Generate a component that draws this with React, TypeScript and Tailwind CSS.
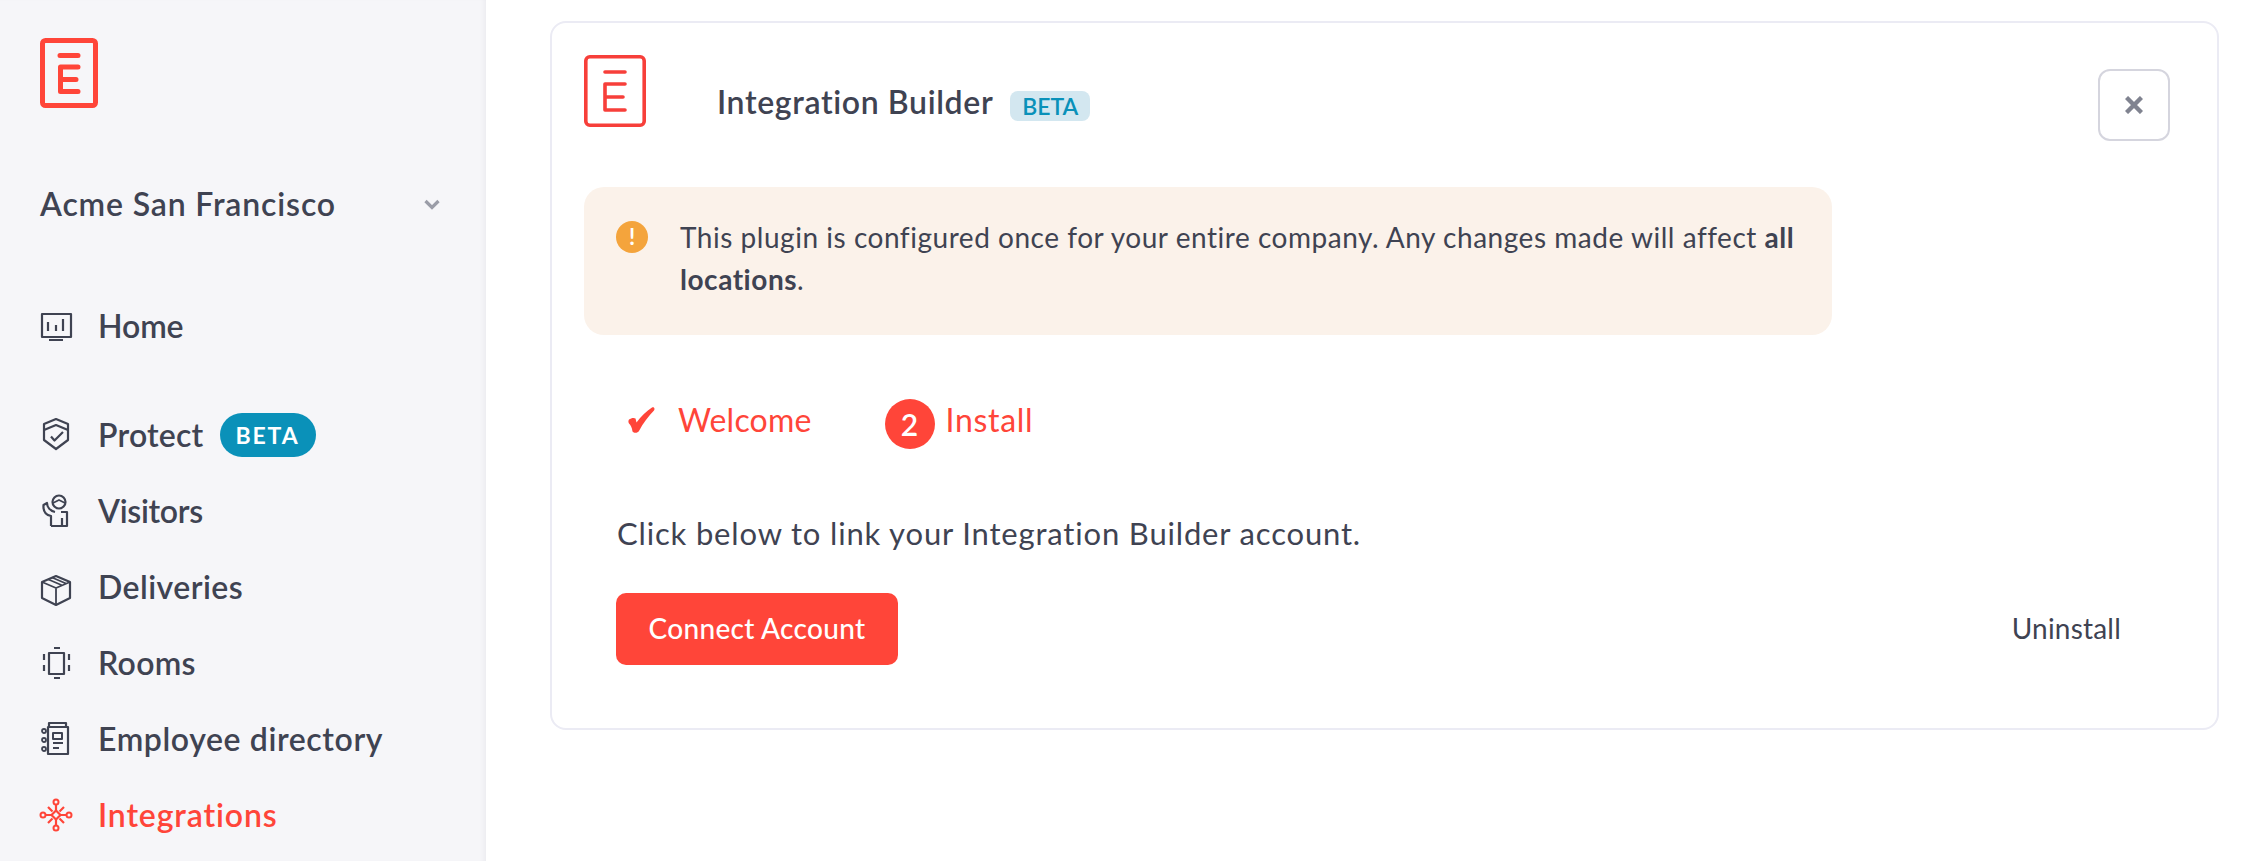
import React from "react";

const Svg = ({ children, y = 0 }: { children: React.ReactNode; y?: number }) => (
  <svg width="40" height="40" viewBox={`0 ${y} 40 40`} fill="none" stroke="currentColor" strokeWidth="2.2" strokeLinecap="butt" strokeLinejoin="round" className="shrink-0">
    {children}
  </svg>
);

const HomeIcon = () => (
  <Svg>
    <rect x="6" y="8" width="29" height="23" />
    <path d="M12 16v9M20 19v6M27 13v12M13 34h14" />
  </Svg>
);
const ProtectIcon = () => (
  <Svg>
    <path d="M20 4l12 5v16l-12 9-12-9V9z" />
    <path d="M8 15l12-5 12 5M15 21.500l3.500 4L27 17" />
  </Svg>
);
const VisitorsIcon = () => (
  <Svg y={1}>
    <circle cx="23" cy="12" r="6.500" />
    <path d="M17 13l6-3 6 3" strokeWidth="1.800" />
    <path d="M15 36h16V22h-6M15 36V26C10 25 7 21 7.500 15L11 13c0 4 3 8 8 9M26 36v-8" />
  </Svg>
);
const DeliveriesIcon = () => (
  <Svg y={1}>
    <path d="M20 10l14 6v16l-14 7-14-7V16z" />
    <path d="M6 16l14 6 14-6M20 22v17M12.500 13.500l14 6M16 11.500l14 6" strokeWidth="1.800" />
  </Svg>
);
const RoomsIcon = () => (
  <Svg y={1}>
    <rect x="13" y="11" width="15" height="21" />
    <path d="M18 6h6M18 36h6M8 12v6M8 23v6M33 12v6M33 23v6" />
  </Svg>
);
const DirectoryIcon = () => (
  <Svg y={1}>
    <path d="M12 36h20V9H12zM13 9V5h17v4" />
    <circle cx="8" cy="13" r="2" strokeWidth="1.800" />
    <circle cx="8" cy="22" r="2" strokeWidth="1.800" />
    <circle cx="8" cy="31" r="2" strokeWidth="1.800" />
    <rect x="17" y="15" width="9" height="6" strokeWidth="2" />
    <path d="M17 25h10M17 30h6" strokeWidth="2" />
  </Svg>
);
const IntegrationsIcon = () => (
  <Svg y={1}>
    <path d="M20 16.500l4.500 4.500-4.500 4.500-4.500-4.500z" />
    <circle cx="20" cy="8" r="2.500" strokeWidth="2" />
    <circle cx="20" cy="34" r="2.500" strokeWidth="2" />
    <circle cx="7" cy="21" r="2.500" strokeWidth="2" />
    <circle cx="33" cy="21" r="2.500" strokeWidth="2" />
    <path d="M20 10.500v6M20 25.500v6M9.500 21h6M24.500 21h6M12 13l4.500 4.500M28 13l-4.500 4.500M12 29l4.500-4.500M28 29l-4.500-4.500" />
  </Svg>
);

const Item = ({ icon, label, active, tracking, children }: { icon: React.ReactNode; label: string; active?: boolean; tracking: string; children?: React.ReactNode }) => (
  <div className={`flex h-[76px] items-center gap-[22px] pl-[36px] ${active ? "text-[#ff4539]" : "text-[#3f4352]"}`}>
    {icon}
    <span className={`text-[32px] font-semibold leading-none ${tracking}`}>{label}</span>
    {children}
  </div>
);

export default function App() {
  return (
    <div className="flex h-[861px] overflow-hidden bg-white text-[#3f4352] [font-family:Lato,'Liberation_Sans',sans-serif]">
      <aside className="w-[486px] shrink-0 bg-[#f6f6f9] pt-[38px] shadow-[inset_-5px_0_5px_-3px_rgba(60,60,90,0.06)]">
        <svg width="58" height="70" viewBox="0 0 58 70" fill="none" stroke="#ff4539" strokeWidth="5" strokeLinecap="round" strokeLinejoin="round" className="ml-[40px]">
          <rect x="2.500" y="2.500" width="53" height="65" rx="3" />
          <path d="M20 17.500h18M38 29H20.500v24.500H38M20.500 41.500H36" />
        </svg>
        <div className="mt-[76px] flex h-[40px] items-center justify-between pl-[40px] pr-[46px]">
          <span className="text-[32px] font-semibold leading-none tracking-[0.85px]">Acme San Francisco</span>
          <svg width="16" height="11" viewBox="0 0 16 11" fill="none" stroke="#9b9da8" strokeWidth="3.200">
            <path d="M1.500 2l6.500 6.500L14.500 2" />
          </svg>
        </div>
        <nav className="mt-[64px]">
          <Item icon={<HomeIcon />} label="Home" tracking="tracking-[-0.1px]" />
          <div className="mt-[33px]">
            <Item icon={<ProtectIcon />} label="Protect" tracking="tracking-[0.2px]">
              <span className="-ml-[6px] flex h-[44px] w-[96px] items-center justify-center rounded-full bg-[#0a91b9] text-[23px] font-bold tracking-[0.08em] text-white">BETA</span>
            </Item>
          </div>
          <Item icon={<VisitorsIcon />} label="Visitors" tracking="tracking-[-0.3px]" />
          <Item icon={<DeliveriesIcon />} label="Deliveries" tracking="tracking-[0.45px]" />
          <Item icon={<RoomsIcon />} label="Rooms" tracking="tracking-[0.3px]" />
          <Item icon={<DirectoryIcon />} label="Employee directory" tracking="tracking-[0.6px]" />
          <Item icon={<IntegrationsIcon />} label="Integrations" active tracking="tracking-[0.85px]" />
        </nav>
      </aside>

      <main className="flex-1 pl-[64px] pr-[25px] pt-[21px]">
        <div className="rounded-[16px] border-2 border-[#ebebf4] pb-[63px] pl-[32px] pr-[31px] pt-[32px]">
          <div className="flex items-start">
            <svg width="62" height="72" viewBox="0 0 62 72" fill="none" stroke="#f73f3a" strokeWidth="3.600" strokeLinecap="round" strokeLinejoin="round" className="shrink-0">
              <rect x="1.800" y="1.800" width="58.400" height="68.400" rx="4" />
              <path d="M21 17h20M41 29H21v26h20M21 42h18" />
            </svg>
            <span className="ml-[71px] mt-[29px] text-[32px] font-semibold leading-[36px] tracking-[0.63px]">Integration Builder</span>
            <span className="ml-[17px] mt-[36px] flex h-[30px] w-[80px] items-center justify-center rounded-[8px] bg-[#d3e7f0] text-[23px] font-semibold text-[#0a91b9]">BETA</span>
            <button className="ml-auto mr-[16px] mt-[14px] flex h-[72px] w-[72px] items-center justify-center rounded-[12px] border-2 border-[#d5d5de]">
              <svg width="18" height="18" viewBox="0 0 18 18" stroke="#808390" strokeWidth="4.400">
                <path d="M1.500 1.500l15 15M16.500 1.500l-15 15" />
              </svg>
            </button>
          </div>

          <div className="mt-[46px] flex h-[148px] w-[1248px] rounded-[20px] bg-[#fbf2ea] pl-[32px] pt-[29px]">
            <span className="mt-[5px] flex h-[32px] w-[32px] shrink-0 items-center justify-center rounded-full bg-[#f4a43c] text-[22px] font-bold leading-none text-white">!</span>
            <p className="ml-[32px] text-[28px] leading-[42px] tracking-[0.53px]">
              This plugin is configured once for your entire company. Any changes made will affect <b className="font-bold">all</b>
              <br />
              <b className="font-bold">locations</b>.
            </p>
          </div>

          <div className="mt-[64px] flex h-[50px] items-center pl-[44px] text-[32px] text-[#ff4539]">
            <svg width="27" height="26" viewBox="0 0 27 26" fill="#ff4539" className="mb-[8px] shrink-0">
              <path d="M1 12.500c2-1.500 5-2 6.500-1l1 4C13 9 18.500 4 24 0.500c2-.8 3.200 1 2 3C20.500 9.500 15 16 11 24c-1.200 2.200-5 2.500-6.500.5C4 20.500 2.500 18 1 16.500c-.8-.8-.8-3 0-4z" />
            </svg>
            <span className="ml-[23px] pb-[8px] tracking-[0.2px]">Welcome</span>
            <span className="ml-[73px] flex h-[50px] w-[50px] items-center justify-center rounded-full bg-[#ff4539] text-[30px] font-semibold text-white">2</span>
            <span className="ml-[11px] pb-[8px] tracking-[0.7px]">Install</span>
          </div>

          <p className="mt-[63px] pl-[33px] text-[31px] leading-[42px] tracking-[0.83px]">Click below to link your Integration Builder account.</p>

          <div className="mt-[39px] flex items-center justify-between pl-[32px] pr-[65px]">
            <button className="flex h-[72px] w-[282px] items-center justify-center rounded-[10px] bg-[#ff4539] pb-[3px] text-[28px] font-medium tracking-[0.3px] text-white">Connect Account</button>
            <span className="pb-[3px] text-[28px] tracking-[0.2px]">Uninstall</span>
          </div>
        </div>
      </main>
    </div>
  );
}
